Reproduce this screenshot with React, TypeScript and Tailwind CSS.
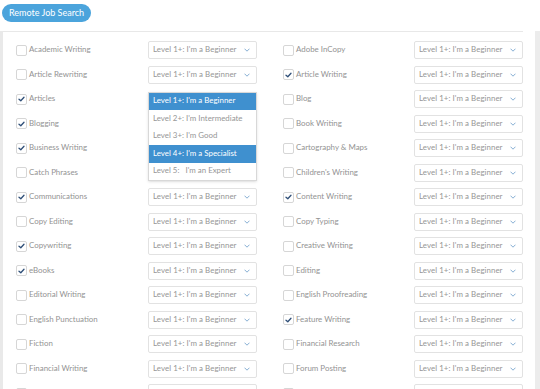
import React from "react";

type Skill = { name: string; checked: boolean };

const LEFT: Skill[] = [
  { name: "Academic Writing", checked: false },
  { name: "Article Rewriting", checked: false },
  { name: "Articles", checked: true },
  { name: "Blogging", checked: true },
  { name: "Business Writing", checked: true },
  { name: "Catch Phrases", checked: false },
  { name: "Communications", checked: true },
  { name: "Copy Editing", checked: false },
  { name: "Copywriting", checked: true },
  { name: "eBooks", checked: true },
  { name: "Editorial Writing", checked: false },
  { name: "English Punctuation", checked: false },
  { name: "Fiction", checked: false },
  { name: "Financial Writing", checked: false },
];

const RIGHT: Skill[] = [
  { name: "Adobe InCopy", checked: false },
  { name: "Article Writing", checked: true },
  { name: "Blog", checked: false },
  { name: "Book Writing", checked: false },
  { name: "Cartography & Maps", checked: false },
  { name: "Children's Writing", checked: false },
  { name: "Content Writing", checked: true },
  { name: "Copy Typing", checked: false },
  { name: "Creative Writing", checked: false },
  { name: "Editing", checked: false },
  { name: "English Proofreading", checked: false },
  { name: "Feature Writing", checked: true },
  { name: "Financial Research", checked: false },
  { name: "Forum Posting", checked: false },
];

const LEVELS = [
  "Level 1+: I'm a Beginner",
  "Level 2+: I'm Intermediate",
  "Level 3+: I'm Good",
  "Level 4+: I'm a Specialist",
  "Level 5:\u00a0\u00a0\u00a0I'm an Expert",
];

// rows hidden under the open dropdown
const COVERED = ["Articles", "Blogging", "Business Writing", "Catch Phrases"];

function Checkbox({ checked }: { checked: boolean }) {
  return (
    <span className="flex h-[11px] w-[11px] shrink-0 items-center justify-center rounded-[2px] border border-[#d6d6d6] bg-white">
      {checked && (
        <svg width="7" height="6" viewBox="0 0 7 6" fill="none">
          <path d="M1 3.2 L2.8 4.8 L6 1.2" stroke="#2f4f78" strokeWidth="1.3" strokeLinecap="round" strokeLinejoin="round" />
        </svg>
      )}
    </span>
  );
}

function LevelSelect({ empty = false }: { empty?: boolean }) {
  return (
    <div className="ml-auto flex h-[18px] w-[109px] shrink-0 items-center justify-between rounded-[2px] border border-[#e2e2e2] bg-white pl-[4px] pr-[6px]">
      <span className="text-[7.9px] tracking-[0.05px] text-[#969696]">{empty ? "" : LEVELS[0]}</span>
      <svg width="6" height="4" viewBox="0 0 6 4" fill="none">
        <path d="M0.5 0.7 L3 3.2 L5.5 0.7" stroke="#86aed3" strokeWidth="1" />
      </svg>
    </div>
  );
}

function Row({ skill, showSelect = true }: { skill: Skill; showSelect?: boolean }) {
  return (
    <div className="flex h-[24.5px] items-center">
      <Checkbox checked={skill.checked} />
      <span className="ml-[2px] text-[7.9px] text-[#939393]">{skill.name}</span>
      {showSelect && <LevelSelect />}
    </div>
  );
}

function PartialRow() {
  return (
    <div className="flex h-[24.5px] items-center">
      <Checkbox checked={false} />
      <LevelSelect empty />
    </div>
  );
}

export default function App() {
  return (
    <div className="h-[389px] w-[540px] overflow-hidden bg-white font-['Lato',sans-serif]">
      <div className="pl-[2px] pt-[4px]">
        <button className="flex h-[18px] items-center rounded-full bg-[#4ba4dc] px-[7px] text-[9px] text-white">
          Remote Job Search
        </button>
      </div>

      <div className="mt-[9px] flex h-full">
        <div className="w-[3px] bg-[#e9e9e9]" />
        <div className="flex-1">
          <div className="mr-[12px] border-t border-[#e8e8e8] pl-[13px] pt-[6px]">
            <div className="relative grid grid-cols-[241px_240px] gap-x-[26px]">
              <div className="flex flex-col">
                {LEFT.map((s) => (
                  <Row key={s.name} skill={s} showSelect={!COVERED.includes(s.name)} />
                ))}
                <PartialRow />
              </div>
              <div className="flex flex-col">
                {RIGHT.map((s) => (
                  <Row key={s.name} skill={s} />
                ))}
                <PartialRow />
              </div>

              {/* open dropdown */}
              <div className="absolute left-[132px] top-[53.5px] w-[109px] border border-[#d8d8d8] bg-white shadow-sm">
                {LEVELS.map((l, i) => (
                  <div
                    key={l}
                    className={
                      i === 0 || i === 3
                        ? "flex h-[17.5px] items-center bg-[#3f90cf] pl-[4px] text-[7.9px] text-white"
                        : "flex h-[17.5px] items-center pl-[4px] text-[7.9px] text-[#969696]"
                    }
                  >
                    {l}
                  </div>
                ))}
              </div>
            </div>
          </div>
        </div>
        <div className="w-[5px] bg-[#ececec]" />
      </div>
    </div>
  );
}
